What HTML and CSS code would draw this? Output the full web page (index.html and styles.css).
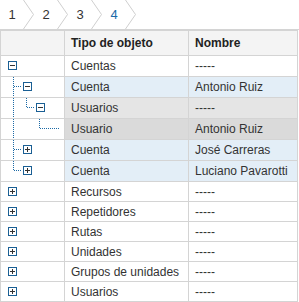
FILE: index.html
```html
<!DOCTYPE html>
<html lang="es">
<head>
    <meta charset="UTF-8">
    <title>Árbol de objetos</title>
    <link rel="stylesheet" href="styles.css">
</head>
<body>
    <div class="grid">
        <!-- Breadcrumb -->
        <div class="crumbs">
            <span class="crumb"><span class="crumb-label">1</span><svg class="crumb-sep" width="11" height="29" viewBox="0 0 11 29"><polyline points="0.5,0 10.5,14.5 0.5,29" /></svg></span>
            <span class="crumb"><span class="crumb-label">2</span><svg class="crumb-sep" width="11" height="29" viewBox="0 0 11 29"><polyline points="0.5,0 10.5,14.5 0.5,29" /></svg></span>
            <span class="crumb"><span class="crumb-label">3</span><svg class="crumb-sep" width="11" height="29" viewBox="0 0 11 29"><polyline points="0.5,0 10.5,14.5 0.5,29" /></svg></span>
            <span class="crumb current"><span class="crumb-label">4</span><svg class="crumb-sep" width="11" height="29" viewBox="0 0 11 29"><polyline points="0.5,0 10.5,14.5 0.5,29" /></svg></span>
        </div>

        <!-- Tree grid -->
        <table class="tree-table">
            <colgroup>
                <col class="col-tree">
                <col class="col-type">
                <col class="col-name">
            </colgroup>
            <thead>
                <tr><th></th><th>Tipo de objeto</th><th>Nombre</th></tr>
            </thead>
            <tbody>
                <tr class="tall">
                    <td class="tree"><svg class="lines" width="63" height="20" viewBox="0 0 63 20"><rect class="box" x="7.5" y="5.5" width="8" height="8"/><line class="sign" x1="9" y1="9.5" x2="14" y2="9.5"/></svg></td>
                    <td>Cuentas</td><td>-----</td>
                </tr>
                <tr class="tall row-account">
                    <td class="tree"><svg class="lines" width="63" height="20" viewBox="0 0 63 20"><line class="dot" x1="12.5" y1="0" x2="12.5" y2="20"/><line class="dot" x1="13" y1="9.5" x2="21" y2="9.5"/><rect class="box" x="22.5" y="5.5" width="8" height="8"/><line class="sign" x1="24" y1="9.5" x2="29" y2="9.5"/></svg></td>
                    <td>Cuenta</td><td>Antonio Ruiz</td>
                </tr>
                <tr class="tall row-group">
                    <td class="tree"><svg class="lines" width="63" height="20" viewBox="0 0 63 20"><line class="dot" x1="12.5" y1="0" x2="12.5" y2="20"/><line class="dot" x1="25.5" y1="0" x2="25.5" y2="10"/><line class="dot" x1="26" y1="9.5" x2="34" y2="9.5"/><rect class="box" x="35.5" y="5.5" width="8" height="8"/><line class="sign" x1="37" y1="9.5" x2="42" y2="9.5"/></svg></td>
                    <td>Usuarios</td><td>-----</td>
                </tr>
                <tr class="tall row-selected">
                    <td class="tree"><svg class="lines" width="63" height="20" viewBox="0 0 63 20"><line class="dot" x1="12.5" y1="0" x2="12.5" y2="20"/><line class="dot" x1="38.5" y1="0" x2="38.5" y2="10"/><line class="dot" x1="39" y1="9.5" x2="59" y2="9.5"/></svg></td>
                    <td>Usuario</td><td>Antonio Ruiz</td>
                </tr>
                <tr class="tall row-account">
                    <td class="tree"><svg class="lines" width="63" height="20" viewBox="0 0 63 20"><line class="dot" x1="12.5" y1="0" x2="12.5" y2="20"/><line class="dot" x1="13" y1="9.5" x2="21" y2="9.5"/><rect class="box" x="22.5" y="5.5" width="8" height="8"/><line class="sign" x1="24" y1="9.5" x2="29" y2="9.5"/><line class="sign" x1="26.5" y1="7" x2="26.5" y2="12"/></svg></td>
                    <td>Cuenta</td><td>José Carreras</td>
                </tr>
                <tr class="tall row-account">
                    <td class="tree"><svg class="lines" width="63" height="20" viewBox="0 0 63 20"><line class="dot" x1="12.5" y1="0" x2="12.5" y2="10"/><line class="dot" x1="13" y1="9.5" x2="21" y2="9.5"/><rect class="box" x="22.5" y="5.5" width="8" height="8"/><line class="sign" x1="24" y1="9.5" x2="29" y2="9.5"/><line class="sign" x1="26.5" y1="7" x2="26.5" y2="12"/></svg></td>
                    <td>Cuenta</td><td>Luciano Pavarotti</td>
                </tr>
                <tr>
                    <td class="tree"><svg class="lines" width="63" height="19" viewBox="0 0 63 19"><rect class="box" x="7.5" y="5.5" width="8" height="8"/><line class="sign" x1="9" y1="9.5" x2="14" y2="9.5"/><line class="sign" x1="11.5" y1="7" x2="11.5" y2="12"/></svg></td>
                    <td>Recursos</td><td>-----</td>
                </tr>
                <tr>
                    <td class="tree"><svg class="lines" width="63" height="19" viewBox="0 0 63 19"><rect class="box" x="7.5" y="5.5" width="8" height="8"/><line class="sign" x1="9" y1="9.5" x2="14" y2="9.5"/><line class="sign" x1="11.5" y1="7" x2="11.5" y2="12"/></svg></td>
                    <td>Repetidores</td><td>-----</td>
                </tr>
                <tr>
                    <td class="tree"><svg class="lines" width="63" height="19" viewBox="0 0 63 19"><rect class="box" x="7.5" y="5.5" width="8" height="8"/><line class="sign" x1="9" y1="9.5" x2="14" y2="9.5"/><line class="sign" x1="11.5" y1="7" x2="11.5" y2="12"/></svg></td>
                    <td>Rutas</td><td>-----</td>
                </tr>
                <tr>
                    <td class="tree"><svg class="lines" width="63" height="19" viewBox="0 0 63 19"><rect class="box" x="7.5" y="5.5" width="8" height="8"/><line class="sign" x1="9" y1="9.5" x2="14" y2="9.5"/><line class="sign" x1="11.5" y1="7" x2="11.5" y2="12"/></svg></td>
                    <td>Unidades</td><td>-----</td>
                </tr>
                <tr>
                    <td class="tree"><svg class="lines" width="63" height="19" viewBox="0 0 63 19"><rect class="box" x="7.5" y="5.5" width="8" height="8"/><line class="sign" x1="9" y1="9.5" x2="14" y2="9.5"/><line class="sign" x1="11.5" y1="7" x2="11.5" y2="12"/></svg></td>
                    <td>Grupos de unidades</td><td>-----</td>
                </tr>
                <tr>
                    <td class="tree"><svg class="lines" width="63" height="19" viewBox="0 0 63 19"><rect class="box" x="7.5" y="5.5" width="8" height="8"/><line class="sign" x1="9" y1="9.5" x2="14" y2="9.5"/><line class="sign" x1="11.5" y1="7" x2="11.5" y2="12"/></svg></td>
                    <td>Usuarios</td><td>-----</td>
                </tr>
            </tbody>
        </table>
    </div>
</body>
</html>
```

FILE: styles.css
```css
/* Base */
* {
    box-sizing: border-box;
}

body {
    margin: 0;
    font-family: 'Liberation Sans', Arial, sans-serif;
    font-size: 12px;
    color: #333;
    background: #fff;
}

.grid {
    width: 299px;
}

/* Breadcrumb */
.crumbs {
    display: flex;
    height: 30px;
    border-bottom: 1px solid #d4d4d4;
}

.crumb {
    display: flex;
    align-items: center;
}

.crumb-label {
    width: 23px;
    padding-left: 1px;
    text-align: center;
    font-size: 13px;
}

.crumb.current .crumb-label {
    color: #1b6aa8;
}

.crumb-sep polyline {
    fill: none;
    stroke: #cfcfcf;
    stroke-width: 1;
}

/* Tree table */
.tree-table {
    border-collapse: collapse;
    table-layout: fixed;
    width: 298px;
}

.col-tree {
    width: 64px;
}

.col-type {
    width: 124px;
}

.tree-table th,
.tree-table td {
    border: 1px solid #d4d4d4;
    padding: 0 6px;
    text-align: left;
    white-space: nowrap;
    overflow: hidden;
}

.tree-table th {
    height: 25px;
    background: #f4f4f4;
    font-weight: bold;
    color: #222;
}

.tree-table td {
    height: 20px;
}

.tree-table tr.tall td {
    height: 21px;
}

.tree-table td.tree {
    padding: 0;
    line-height: 0;
}

.row-account td {
    background: #e3eef7;
}

.row-group td {
    background: #e5e5e5;
}

.row-selected td {
    background: #dadada;
}

.tree-table tr td.tree {
    background: #fff;
}

/* Tree lines and toggles */
.lines .dot {
    stroke: #1c6aa6;
    stroke-width: 1;
    stroke-dasharray: 1 1;
}

.lines .box {
    fill: #fff;
    stroke: #1a5f94;
    stroke-width: 1;
}

.lines .sign {
    stroke: #333;
    stroke-width: 1;
}
```
